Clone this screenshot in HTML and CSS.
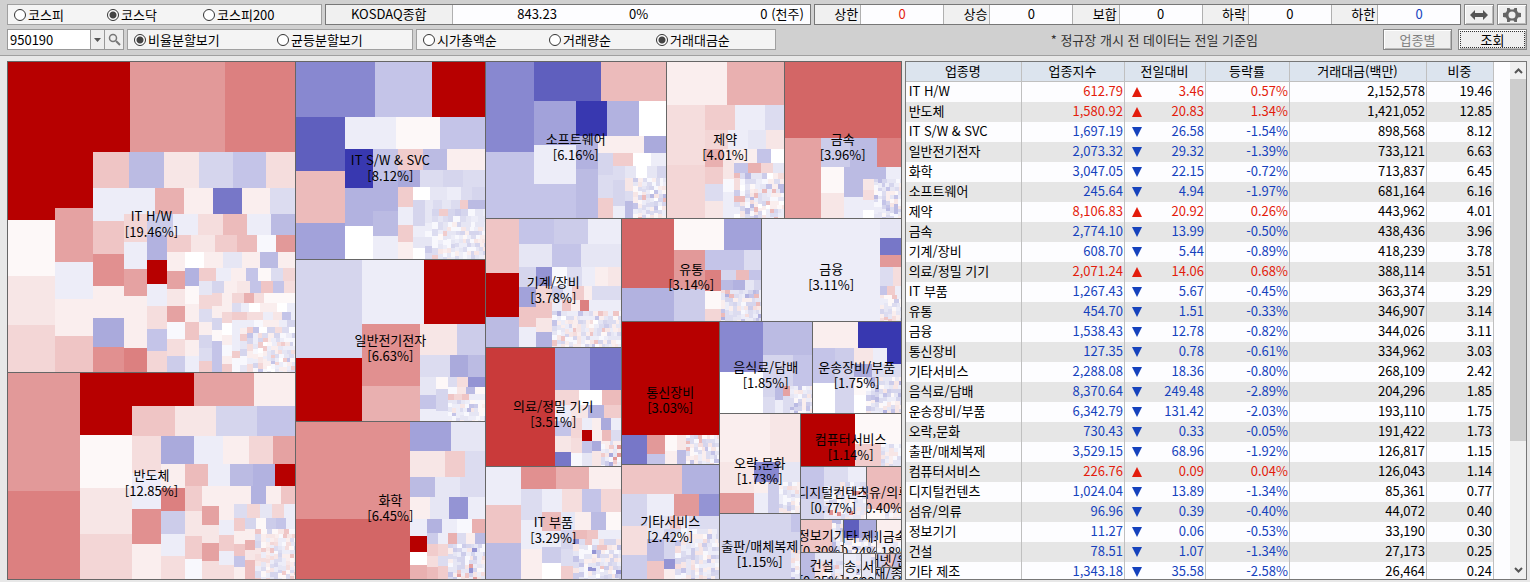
FILE: index.html
```
<!DOCTYPE html>
<html lang="ko">
<head>
    <meta charset="UTF-8">
    <meta name="viewport" content="width=device-width,initial-scale=1">
    <title>업종별 시장지도</title>
    <link rel="stylesheet" href="styles.css">
</head>
<body>
<form class="toolbar">
    <div class="bar">
        <div class="group markets">
            <label><input type="radio" name="market">코스피</label>
            <label><input type="radio" name="market" checked>코스닥</label>
            <label><input type="radio" name="market">코스피200</label>
        </div>
        <div class="index">
            <span class="index-name">KOSDAQ종합</span>
            <span class="index-value">843.23</span>
            <span class="index-rate">0%</span>
            <span class="index-volume">0 (천주)</span>
        </div>
        <dl class="counts">
            <dt>상한</dt><dd class="up">0</dd>
            <dt>상승</dt><dd>0</dd>
            <dt>보합</dt><dd>0</dd>
            <dt>하락</dt><dd>0</dd>
            <dt>하한</dt><dd class="down">0</dd>
        </dl>
        <button type="button" class="icon-button" aria-label="넓게">
            <svg width="18" height="10" viewBox="0 0 18 10"><path d="M0 5L5 0V3H13V0L18 5L13 10V7H5V10Z" fill="#555"/></svg>
        </button>
        <button type="button" class="icon-button" aria-label="설정">
            <svg width="18" height="14" viewBox="0 0 18 14">
                <path d="M4 0H6.500L7.500 1.500H10.500L11.500 0H14V2.500L15 4.500L18 5V9L15 9.500L14 11.500V14H11.500L10.500 12.500H7.500L6.500 14H4V11.500L3 9.500L0 9V5L3 4.500L4 2.500Z" fill="#666"/>
                <circle cx="9" cy="7" r="3.500" fill="#eee"/>
            </svg>
        </button>
    </div>
    <div class="bar">
        <div class="code">
            <input type="text" value="950190" aria-label="종목코드">
            <button type="button" aria-label="목록"><svg width="7" height="4" viewBox="0 0 7 4"><path d="M0 0H7L3.500 4Z" fill="#555"/></svg></button>
            <button type="button" class="search" aria-label="찾기">
                <svg width="13" height="13" viewBox="0 0 13 13" fill="none" stroke="#777"><circle cx="5" cy="5" r="3.500" stroke-width="1.500"/><path d="M8 8L12 12" stroke-width="2"/></svg>
            </button>
        </div>
        <div class="group split">
            <label><input type="radio" name="split" checked>비율분할보기</label>
            <label><input type="radio" name="split">균등분할보기</label>
        </div>
        <div class="group order">
            <label><input type="radio" name="order">시가총액순</label>
            <label><input type="radio" name="order">거래량순</label>
            <label><input type="radio" name="order" checked>거래대금순</label>
        </div>
        <p class="notice">* 정규장 개시 전 데이터는 전일 기준임</p>
        <button type="button" class="action" disabled>업종별</button>
        <button type="button" class="action query">조회</button>
    </div>
</form>
<main>
    <section class="treemap" id="treemap"></section>
    <section class="listing">
        <table>
            <colgroup><col><col class="w-index"><col class="w-diff"><col class="w-rate"><col class="w-amount"><col class="w-weight"></colgroup>
            <thead>
                <tr><th>업종명</th><th>업종지수</th><th>전일대비</th><th>등락률</th><th>거래대금(백만)</th><th>비중</th></tr>
            </thead>
            <tbody id="rows"></tbody>
        </table>
        <div class="scrollbar">
            <svg width="9" height="6" viewBox="0 0 9 6"><path d="M1 5L4.500 1.500L8 5" fill="none" stroke="#555" stroke-width="2"/></svg>
            <div class="track"><div class="thumb"></div></div>
            <svg width="9" height="6" viewBox="0 0 9 6"><path d="M1 1L4.500 4.500L8 1" fill="none" stroke="#555" stroke-width="2"/></svg>
        </div>
    </section>
</main>
<script src="map.js"></script>
</body>
</html>
```
FILE: styles.css
```
* {
    box-sizing: border-box;
}
body {
    background: #e8e8e8;
    color: #000;
    display: flex;
    flex-direction: column;
    font-family: "Noto Sans CJK KR", sans-serif;
    font-size: 13px;
    height: 100vh;
    line-height: 16px;
    margin: 0;
    overflow: hidden;
}
input,
button {
    font: inherit;
    margin: 0;
}
.toolbar {
    background: #d0d0d0;
    border-bottom: solid 1px #a0a0a0;
    display: flex;
    flex: none;
    flex-direction: column;
    gap: 4px;
    height: 56px;
    padding: 4px 3px 0 7px;
}
.bar {
    display: flex;
    gap: 3px;
    height: 21px;
}
.group {
    align-items: center;
    background: #f4f4f4;
    border: solid 1px #a0a0a0;
    display: grid;
    flex: none;
    padding-left: 6px;
}
.group label {
    align-items: center;
    display: flex;
    gap: 2px;
    white-space: nowrap;
}
.markets {
    grid-template-columns: 93px 96px 1fr;
    width: 315px;
}
.split {
    grid-template-columns: 143px 1fr;
    width: 286px;
}
.order {
    grid-template-columns: 126px 107px 1fr;
    width: 360px;
}
input[type="radio"] {
    appearance: none;
    background: #fff;
    border: solid 1px #333;
    border-radius: 50%;
    height: 12px;
    width: 12px;
}
input[type="radio"]:checked {
    background: radial-gradient(#444 0 3px, #fff 4px);
}
.index,
.counts {
    background: #fdfdff;
    border: solid 1px #777;
    display: flex;
    line-height: 18px;
    margin: 0;
    min-width: 0;
    text-align: right;
    white-space: nowrap;
}
.index {
    flex: 483 1 0;
    padding-right: 6px;
}
.index-name {
    background: #f0f0f0;
    border-right: solid 1px #b0b0b0;
    flex: 125 1 0;
    text-align: center;
}
.index-value {
    flex: 104 1 0;
}
.index-rate {
    flex: 91 1 0;
}
.index-volume {
    flex: 155 1 0;
}
.counts {
    flex: 652 1 0;
}
.counts dt {
    background: #f0f0f0;
    border-right: solid 1px #b0b0b0;
    flex: 45 1 0;
    padding-right: 2px;
}
.counts dd {
    border-right: solid 1px #b0b0b0;
    flex: 85 1 0;
    margin: 0;
    text-align: center;
}
.counts dd:last-child {
    border-right: none;
}
.up {
    color: #e31c0c;
}
.down {
    color: #1542bd;
}
.icon-button,
.action {
    align-items: center;
    background: #efefef;
    border: solid 1px #888;
    box-shadow: inset 1px 1px #fff, inset -1px -1px #bbb;
    display: flex;
    flex: none;
    justify-content: center;
    padding: 0;
}
.icon-button {
    width: 30px;
}
.code {
    background: #fff;
    border: solid 1px #999;
    display: flex;
    flex: none;
    width: 117px;
}
.code input {
    border: none;
    flex: 1;
    min-width: 0;
    outline: none;
    padding: 0 2px;
}
.code button {
    align-items: center;
    background: #eee;
    border: none;
    border-left: solid 1px #999;
    display: flex;
    justify-content: center;
    padding: 0;
    width: 14px;
}
.code .search {
    width: 19px;
}
.notice {
    color: #333;
    flex: 1;
    line-height: 21px;
    margin: 0 122px 0 0;
    text-align: right;
    white-space: nowrap;
}
.action {
    width: 69px;
}
.action:disabled {
    color: #808080;
}
.query {
    margin-left: 3px;
    outline: dotted 1px #333;
    outline-offset: -3px;
}
main {
    display: flex;
    flex: 1;
    gap: 3px;
    min-height: 0;
    padding: 5px 3px 2px 7px;
}
.treemap {
    border: solid 1px #666;
    display: flex;
    flex: 895 1 0;
    min-width: 0;
}
.map-row,
.map-col {
    background: #666;
    display: flex;
    flex-basis: 0;
    gap: 1px;
    min-height: 0;
    min-width: 0;
}
.map-col {
    flex-direction: column;
}
.sector {
    background: #fff;
    flex-basis: 0;
    min-height: 0;
    min-width: 0;
    overflow: hidden;
    position: relative;
}
.sector svg {
    display: block;
    height: 100%;
    left: 0;
    position: absolute;
    shape-rendering: crispEdges;
    top: 0;
    width: 100%;
}
.sector p {
    left: 50%;
    margin: -9px 0 0;
    position: absolute;
    text-align: center;
    top: 50%;
    transform: translateX(-50%);
    white-space: nowrap;
}
.sector span {
    display: block;
}
.listing {
    background: #fdfdff;
    border: solid 1px #777;
    display: flex;
    flex: 622 1 0;
    gap: 16px;
    min-width: 0;
    overflow: hidden;
}
table {
    align-self: flex-start;
    border-collapse: separate;
    border-spacing: 0;
    flex: 1;
    min-width: 0;
    table-layout: fixed;
    width: 100%;
}
.w-index {
    width: 103px;
}
.w-diff {
    width: 81px;
}
.w-rate {
    width: 84px;
}
.w-amount {
    width: 137px;
}
.w-weight {
    width: 67px;
}
th,
td {
    border-right: solid 1px #c0c0c0;
    height: 20px;
    line-height: 16px;
    overflow: hidden;
    padding: 0 1px 2px 0;
    text-align: right;
    white-space: nowrap;
}
th {
    background: #dce4ee;
    border-bottom: solid 1px #c0c0c0;
    font-weight: normal;
    text-align: center;
}
td:first-child {
    padding-left: 3px;
    text-align: left;
}
tbody tr:nth-child(even) {
    background: #e6e6e6;
}
td svg {
    float: left;
    margin: 4px 0 0 7px;
}
.scrollbar {
    align-items: center;
    background: #f0f0f0;
    display: flex;
    flex: none;
    flex-direction: column;
    gap: 5px;
    padding: 6px 0;
    width: 16px;
}
.track {
    flex: 1;
    width: 100%;
}
.thumb {
    background: #cdcdcd;
    height: 75%;
}
```
FILE: map.js
```
const RED = ['#fdf8f8', '#faeeee', '#f7e6e6', '#f5dddd', '#f3d6d6', '#f1cccc', '#efc5c5', '#ecbbbb',
    '#e9b0b0', '#e5a2a2', '#e29999', '#e19090', '#dc8080', '#d36666', '#c93a3a', '#b70000'];
const BLUE = ['#f8f8fd', '#ededf8', '#e6e6f4', '#dcdcf0', '#d5d5ed', '#ccccea', '#c4c4e8', '#bbbbe3',
    '#b2b2e0', '#aaaadc', '#a2a2da', '#9494d4', '#8888d0', '#7777c8', '#5f5fbe', '#3838b0'];

// A-P are rising shades, a-p falling ones, W is unchanged
const shade = c => c === 'W' ? '#fff' : c < 'a' ? RED[c.charCodeAt(0) - 65] : BLUE[c.charCodeAt(0) - 97];

const rect = (x, y, w, h, c) => `<rect x="${x}" y="${y}" width="${w}" height="${h}" fill="${shade(c)}"/>`;

// Each strip is cut off the top (r) or the left (c) of what is left; its last stock takes the rest.
const drawTiles = (w, h, strips, small) => {
    let x = 0, y = 0, seed = w * 31 + h * 17, out = '';
    const rand = () => (seed = (seed * 16807) % 2147483647) / 2147483647;
    const cut = (isRow, size, items) => {
        const length = isRow ? w - x : h - y;
        let pos = 0;
        items.forEach(([len, c], i) => {
            const l = i === items.length - 1 ? length - pos : Math.min(len, length - pos);
            if (l > 0) {
                out += isRow ? rect(x + pos, y, l, size, c) : rect(x, y + pos, size, l, c);
            }
            pos += l;
        });
        if (isRow) y += size;
        else x += size;
    };
    strips.split('|').filter(Boolean).forEach(strip => {
        const [head, ...items] = strip.trim().split(' ');
        cut(head[0] === 'r', +head.slice(1), items.map(s => [parseInt(s) || 0, s.slice(-1)]));
    });
    // the many small stocks in the lower right corner
    for (let isRow = false; x < w && y < h; isRow = !isRow) {
        const space = isRow ? h - y : w - x;
        const size = Math.min(space, Math.max(4, Math.round(Math.min(w - x, h - y) * 0.14)));
        const colors = size < 6 ? 'aabbbccddeBBCCA' + small : small;
        const items = [];
        for (let len = isRow ? w - x : h - y; len > 0;) {
            const l = Math.max(3, Math.round(size * (0.8 + rand() * 0.5)));
            items.push([l, colors[Math.floor(rand() * colors.length)]]);
            len -= l;
        }
        cut(isRow, size, items);
    }
    return out;
};

const sector = (w, h, name, share, strips, small = 'abbccddeefgBCA') => ({
    w, h,
    draw: grow => `<div class="sector" style="flex-grow:${grow}">
        <svg viewBox="0 0 ${w} ${h}" preserveAspectRatio="none">${drawTiles(w, h, strips, small)}</svg>
        <p><span>${name}</span><span>[${share}%]</span></p></div>`
});
const sum = (list, key) => list.reduce((n, item) => n + item[key], list.length - 1);
const row = (...list) => ({
    w: sum(list, 'w'), h: list[0].h,
    draw: grow => `<div class="map-row" style="flex-grow:${grow}">${list.map(s => s.draw(s.w)).join('')}</div>`
});
const col = (...list) => ({
    w: list[0].w, h: sum(list, 'h'),
    draw: grow => `<div class="map-col" style="flex-grow:${grow}">${list.map(s => s.draw(s.h)).join('')}</div>`
});

const map = row(
    col(
        sector(287, 310, 'IT H/W', '19.46', 'r90 122P 95K M|c47 68P 56A 49C E|c38 56P 54J 37b 37B G|r36 36G 35h 35C 34e 33g D|c31 33b 33G 32L 32B 29j L|r26 31b 29I 29B 29n 28B d|c23 28E 27b 27J 52B M|r21 26f 25b 25D 24H 24b h|c20 25i 24P 22b 23D 22g E|r17 24F 24C 22F 20H 19a K|c18 19B 18J 17C 16J 17a 17D f|r16 19W 19B 19c 18B 18h B|c14 18i 18A 18B 18G 16B b|r13 17F 15b 15B 12g 13A 12d E|c13 14c 14E 13d 13B 13e 13d F|r12 12e 13B 13C 11g 12G 11g D|c10 13E 12B 12e 11A g|r10 10B 12E 10I 10D A', 'bbccddeebBBCDEFaAgW'),
        sector(287, 206, '반도체', '12.85', 'c72 118K M|r33 114P 60J B|c52 29P 53A 46C E|r30 43G 41C 41e g|c29 37D 36b 35L B|r28 33j 29b 26B 24E J|c24 24B 23M 23f 22b D|r22 23H 22b 23h 22i P|c17 25F 25C 23F a|c17 20B 19J 18C 18J D|r18 32B 15i 15B G|c15 16B 15b 16F 14b D|r14 13d 13E 12c 12E b|c11 13F 13B 12G 11g B|r11 11e 10A 10f 10g b|c10 11B 10I 10C H', 'BBCCDDEFAAbcdeGB')
    ),
    col(
        sector(189, 197, 'IT S/W &amp; SVC', '8.12', 'r55 79m 57g P|c49 54o 52H k|r32 51b 44A g|c28 39p 38i W|c25 32g 30i 25h b|r21 25F 24h B|r17 22j 23d 20e d|c15 20F 18b 17F B|r13 17W 17c 14b 11d e|c12 26e 11b 11c 11W f|r9 8c 9d 9c 9d 8F h', 'abbccddeebcdfCFa'),
        sector(189, 161, '일반전기전자', '6.63', 'c66 98e P|r64 62b P|c58 62L I|r31 37C f|r22 30d 18j h|c16 18c 14g b|c12 12A 22e b|r10 9d 11D l|r7 9a 9C 9h A|r6 6G 8E 7G b', 'aabbccdeefghBAW'),
        sector(189, 157, '화학', '6.45', 'c114 97L N|r29 41k c|r26 35C 20F d|r20 25h 25c d|r22 20B 19c 19l b|c17 17b 16P 13W I|r14 15i 15b 15a I|r11 11f 10b 9I 9d 9B h|c11 12F 11D H|c10 12E 10d F', 'abbccddeefgBDGJl')
    ),
    col(
        row(
            sector(180, 156, '소프트웨어', '6.16', 'c48 90m g|r39 67o H|c42 44k 39b g|r35 31p 32i W|c22 33i h|r17 46B j|c15 22e 23d F|r13 20F 18W b|c12 14d 26e b|r12 11c 11W 10c e|c8 13C 10d h', 'abbccddeefgBHhW'),
            sector(117, 156, '제약', '4.01', 'r43 60B I|c38 60D E|r25 30F 30b d|r19 23E 20b 18c C|c18 18I 17F 17d C|r14 11C 23B 14g W|c11 16C 13a b|r10 14g 13I 12E c', 'abbccddeefghBDHW'),
            sector(116, 156, '금속', '3.96', 'r76 N|c36 J|r29 29f 27h M|c23 26A C|c19 30h b|r12 23h b|c11 11C 10D 10b W', 'bbccddeefgha')
        ),
        row(
            col(
                sector(135, 128, '기계/장비', '3.78', 'c33 54G 44P h|r25 35g 34f b|r23 33c 29g c|c17 20e 20k 20G b|r19 16l 15a 15d 13b 13B C|c16 16E 16G 14C i|r14 11f 9b 12F 8B d|r11 10b 9G 9B 9M b', 'abbccddeefgBCDGiW'),
                sector(135, 118, '의료/정밀 기기', '3.51', 'c69 O|r42 35k n|r15 24E 23W H|c16 16b 15g 16C n|r13 17C 16i F|c11 20E 15D a|r12 10b 9B 10j b|r11 10P 10B 9H d|c10 12g c|c9 10j C', 'abbccddefgBFDGKj'),
                sector(135, 112, 'IT 부품', '3.29', 'c35 38b 38G h|r22 35L 33I B|c21 31d 29b B|r23 20b 20D 19g E|c19 19H 16b 16f W|r18 14c 16B 15h A|c12 19e 17d F|r9 14H 11G b', 'bbccddeefgBCDGlW')
            ),
            col(
                row(
                    sector(139, 102, '유통', '3.14', 'c52 69N i|r31 50A k|c31 39K f|r20 39g d|c16 21M 18A E|r10 15e 13H g|r10 12h 12i 9c e', 'abbccddeefgBDHhi'),
                    sector(139, 102, '금융', '3.11', 'c118 b|r19 c|r17 n|r12 K|r19 13d D|r9 7g 8F b', 'abcdefgBCDGA')
                ),
                row(
                    col(
                        sector(97, 142, '통신장비', '3.03', 'r113 P|c25 n|c18 19K g|c12 16A B|c9 15C h', 'abbccddeBDAgH'),
                        sector(97, 114, '기타서비스', '2.42', 'r29 60G i|c25 32e 29D f|r22 27b 25K l|c17 23c 22h G|r13 6c 11F 8b d|c11 30e 10l B', 'abbccddeefgBCD')
                    ),
                    col(
                        row(
                            sector(92, 91, '음식료/담배', '1.85', 'c43 50m W|r33 h|r31 30e g|c12 11e d|c8 14h b|c7 10J d', 'bbcddeefghBC'),
                            sector(88, 91, '운송장비/부품', '1.75', 'r26 45B p|c22 35g W|c19 22f e|r16 19C 14b p|r13 18j d|c12 18A W', 'bccddeefghiCa')
                        ),
                        row(
                            col(
                                sector(80, 99, '오락,문화', '1.73', 'r48 50B C|c34 31C K|r20 25m c|c14 11B b|c11 19f', 'abccddeefgBCDG'),
                                sector(80, 65, '출판/매체복제', '1.15', 'c71 e|r18 g|r18 e', 'abdeghD')
                            ),
                            col(
                                sector(100, 52, '컴퓨터서비스', '1.14', 'c54 P|r30 A|c26 F', 'abdeBCDG'),
                                row(
                                    sector(65, 52, '디지털컨텐츠', '0.77', 'c23 32g e|r15 24d b', 'abbccdefgBCL'),
                                    sector(34, 52, '섬유/의류', '0.40', 'r42 H|c18 A', 'bdBC')
                                ),
                                row(
                                    col(
                                        sector(42, 32, '정보기기', '0.30', 'c31 G', 'bdhAgn'),
                                        sector(42, 26, '건설', '0.25', 'c14 h|r8 c|c8 D', 'bcdeGBj')
                                    ),
                                    col(
                                        row(
                                            sector(32, 33, '기타 제조', '0.24', 'r18 15o j', 'bcaAeg'),
                                            sector(24, 33, '비금속', '0.18', 'r22 B', 'bcCeg')
                                        ),
                                        row(
                                            sector(17, 25, '방송,서', '0.16', 'c12 b'),
                                            sector(13, 25, '서', '0.09', 'c9 c'),
                                            col(
                                                sector(25, 13, '인터넷/운송', '0.08', 'c9 f|c9 G|c7 h'),
                                                sector(25, 11, '목재/종이', '0.05', 'c18 e')
                                            )
                                        )
                                    )
                                )
                            )
                        )
                    )
                )
            )
        )
    )
);
document.getElementById('treemap').innerHTML = map.draw(1);

// name, index, change, rate, amount, weight
const sectors = [
    ['IT H/W', '612.79', '3.46', '0.57', '2,152,578', '19.46'],
    ['반도체', '1,580.92', '20.83', '1.34', '1,421,052', '12.85'],
    ['IT S/W &amp; SVC', '1,697.19', '26.58', '-1.54', '898,568', '8.12'],
    ['일반전기전자', '2,073.32', '29.32', '-1.39', '733,121', '6.63'],
    ['화학', '3,047.05', '22.15', '-0.72', '713,837', '6.45'],
    ['소프트웨어', '245.64', '4.94', '-1.97', '681,164', '6.16'],
    ['제약', '8,106.83', '20.92', '0.26', '443,962', '4.01'],
    ['금속', '2,774.10', '13.99', '-0.50', '438,436', '3.96'],
    ['기계/장비', '608.70', '5.44', '-0.89', '418,239', '3.78'],
    ['의료/정밀 기기', '2,071.24', '14.06', '0.68', '388,114', '3.51'],
    ['IT 부품', '1,267.43', '5.67', '-0.45', '363,374', '3.29'],
    ['유통', '454.70', '1.51', '-0.33', '346,907', '3.14'],
    ['금융', '1,538.43', '12.78', '-0.82', '344,026', '3.11'],
    ['통신장비', '127.35', '0.78', '-0.61', '334,962', '3.03'],
    ['기타서비스', '2,288.08', '18.36', '-0.80', '268,109', '2.42'],
    ['음식료/담배', '8,370.64', '249.48', '-2.89', '204,296', '1.85'],
    ['운송장비/부품', '6,342.79', '131.42', '-2.03', '193,110', '1.75'],
    ['오락,문화', '730.43', '0.33', '-0.05', '191,422', '1.73'],
    ['출판/매체복제', '3,529.15', '68.96', '-1.92', '126,817', '1.15'],
    ['컴퓨터서비스', '226.76', '0.09', '0.04', '126,043', '1.14'],
    ['디지털컨텐츠', '1,024.04', '13.89', '-1.34', '85,361', '0.77'],
    ['섬유/의류', '96.96', '0.39', '-0.40', '44,072', '0.40'],
    ['정보기기', '11.27', '0.06', '-0.53', '33,190', '0.30'],
    ['건설', '78.51', '1.07', '-1.34', '27,173', '0.25'],
    ['기타 제조', '1,343.18', '35.58', '-2.58', '26,464', '0.24']
];
document.getElementById('rows').innerHTML = sectors.map(([name, index, change, rate, amount, weight]) => {
    const dir = rate[0] === '-' ? 'down' : 'up';
    const arrow = dir === 'up' ? 'M0 10L5 0L10 10Z' : 'M0 0H10L5 10Z';
    return `<tr><td>${name}</td><td class="${dir}">${index}</td>
        <td class="${dir}"><svg width="10" height="10"><path d="${arrow}" fill="currentColor"/></svg>${change}</td>
        <td class="${dir}">${rate}%</td><td>${amount}</td><td>${weight}</td></tr>`;
}).join('');
```
